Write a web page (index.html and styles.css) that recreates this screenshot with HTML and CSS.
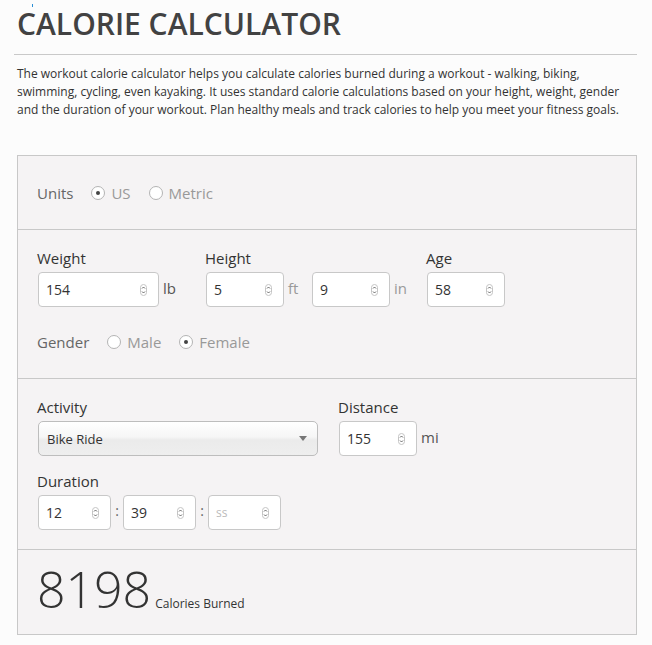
FILE: index.html
```html
<!DOCTYPE html>
<html>
<head>
<meta charset="utf-8">
<link rel="stylesheet" href="styles.css">
</head>
<body>
<div class="page">
  <span class="crumb"></span>
  <h1 class="title">CALORIE CALCULATOR</h1>
  <hr class="rule">
  <p class="intro">The workout calorie calculator helps you calculate calories burned during a workout - walking, biking,<br>swimming, cycling, even kayaking. It uses standard calorie calculations based on your height, weight, gender<br>and the duration of your workout. Plan healthy meals and track calories to help you meet your fitness goals.</p>

  <div class="calc">
    <section class="sec sec-units">
      <div class="radio-row">
        <span class="row-label">Units</span>
        <span class="opt"><span class="radio on"></span>US</span>
        <span class="opt"><span class="radio"></span>Metric</span>
      </div>
    </section>

    <section class="sec sec-body">
      <div class="fields">
        <div class="field">
          <div class="label">Weight</div>
          <div class="line">
            <div class="num w-wide"><span class="val">154</span><svg class="spin" viewBox="0 0 7 12" width="7" height="12"><rect x="0.5" y="0.5" width="6" height="11" rx="3" fill="#fff" stroke="#c4c4c4"/><path d="M2 4.5 L3.5 3 L5 4.5 M2 7.5 L3.5 9 L5 7.5" fill="none" stroke="#555" stroke-width="0.9"/></svg></div>
            <span class="unit u-lb">lb</span>
          </div>
        </div>
        <div class="field">
          <div class="label">Height</div>
          <div class="line">
            <div class="num"><span class="val">5</span><svg class="spin" viewBox="0 0 7 12" width="7" height="12"><rect x="0.5" y="0.5" width="6" height="11" rx="3" fill="#fff" stroke="#c4c4c4"/><path d="M2 4.5 L3.5 3 L5 4.5 M2 7.5 L3.5 9 L5 7.5" fill="none" stroke="#555" stroke-width="0.9"/></svg></div>
            <span class="unit light u-ft">ft</span>
            <div class="num"><span class="val">9</span><svg class="spin" viewBox="0 0 7 12" width="7" height="12"><rect x="0.5" y="0.5" width="6" height="11" rx="3" fill="#fff" stroke="#c4c4c4"/><path d="M2 4.5 L3.5 3 L5 4.5 M2 7.5 L3.5 9 L5 7.5" fill="none" stroke="#555" stroke-width="0.9"/></svg></div>
            <span class="unit light u-in">in</span>
          </div>
        </div>
        <div class="field">
          <div class="label">Age</div>
          <div class="line">
            <div class="num"><span class="val">58</span><svg class="spin" viewBox="0 0 7 12" width="7" height="12"><rect x="0.5" y="0.5" width="6" height="11" rx="3" fill="#fff" stroke="#c4c4c4"/><path d="M2 4.5 L3.5 3 L5 4.5 M2 7.5 L3.5 9 L5 7.5" fill="none" stroke="#555" stroke-width="0.9"/></svg></div>
          </div>
        </div>
      </div>
      <div class="radio-row gender">
        <span class="row-label">Gender</span>
        <span class="opt"><span class="radio"></span>Male</span>
        <span class="opt"><span class="radio on"></span>Female</span>
      </div>
    </section>

    <section class="sec sec-activity">
      <div class="fields">
        <div class="field">
          <div class="label">Activity</div>
          <div class="select"><span>Bike Ride</span><span class="caret"></span></div>
        </div>
        <div class="field">
          <div class="label">Distance</div>
          <div class="line">
            <div class="num"><span class="val">155</span><svg class="spin" viewBox="0 0 7 12" width="7" height="12"><rect x="0.5" y="0.5" width="6" height="11" rx="3" fill="#fff" stroke="#c4c4c4"/><path d="M2 4.5 L3.5 3 L5 4.5 M2 7.5 L3.5 9 L5 7.5" fill="none" stroke="#555" stroke-width="0.9"/></svg></div>
            <span class="unit">mi</span>
          </div>
        </div>
      </div>
      <div class="field duration">
        <div class="label">Duration</div>
        <div class="line">
          <div class="num w-dur"><span class="val">12</span><svg class="spin" viewBox="0 0 7 12" width="7" height="12"><rect x="0.5" y="0.5" width="6" height="11" rx="3" fill="#fff" stroke="#c4c4c4"/><path d="M2 4.5 L3.5 3 L5 4.5 M2 7.5 L3.5 9 L5 7.5" fill="none" stroke="#555" stroke-width="0.9"/></svg></div>
          <span class="colon">:</span>
          <div class="num w-dur"><span class="val">39</span><svg class="spin" viewBox="0 0 7 12" width="7" height="12"><rect x="0.5" y="0.5" width="6" height="11" rx="3" fill="#fff" stroke="#c4c4c4"/><path d="M2 4.5 L3.5 3 L5 4.5 M2 7.5 L3.5 9 L5 7.5" fill="none" stroke="#555" stroke-width="0.9"/></svg></div>
          <span class="colon">:</span>
          <div class="num w-dur"><span class="val ph">ss</span><svg class="spin" viewBox="0 0 7 12" width="7" height="12"><rect x="0.5" y="0.5" width="6" height="11" rx="3" fill="#fff" stroke="#c4c4c4"/><path d="M2 4.5 L3.5 3 L5 4.5 M2 7.5 L3.5 9 L5 7.5" fill="none" stroke="#555" stroke-width="0.9"/></svg></div>
        </div>
      </div>
    </section>

    <section class="sec sec-result">
      <span class="big">8198</span><span class="cap">Calories Burned</span>
    </section>
  </div>
</div>
</body>
</html>
```
FILE: styles.css
```css
* { box-sizing: border-box; }
html, body { margin: 0; padding: 0; }
body {
  background: #fcfcfc;
  font-family: "Open Sans", "Liberation Sans", sans-serif;
  color: #333;
}
.page {
  position: relative;
  padding-left: 17px;
  width: 637px;
}
.crumb {
  position: absolute;
  left: 32px;
  top: 0;
  width: 1px;
  height: 3px;
  background: #2a8fd6;
}
.title {
  margin: 4px 0 0 0;
  font-size: 30px;
  line-height: 40px;
  font-weight: 600;
  color: #424242;
}
.rule {
  margin: 10px 0 0 -3px;
  border: 0;
  border-top: 1px solid #c9c9c9;
  height: 0;
}
.intro {
  margin: 10px 0 0 0;
  font-size: 12px;
  line-height: 18px;
  color: #333;
  white-space: nowrap;
}
.calc {
  margin-top: 36px;
  width: 620px;
  background: #f5f3f4;
  border: 1px solid #c8c8c8;
}
.sec {
  padding-left: 19px;
  border-top: 1px solid #c8c8c8;
}
.sec:first-child { border-top: 0; }
.sec-units { padding-top: 27px; padding-bottom: 26px; }
.sec-body { padding-top: 18px; padding-bottom: 26px; }
.sec-activity { padding-top: 18px; padding-bottom: 19px; }
.sec-result { padding-top: 14px; padding-bottom: 20px; display: flex; align-items: baseline; }

.radio-row {
  display: flex;
  align-items: center;
  font-size: 15px;
  line-height: 20px;
  height: 20px;
}
.row-label { color: #666; }
.opt {
  display: flex;
  align-items: center;
  color: #999;
  margin-left: 18px;
}
.radio {
  width: 14px;
  height: 14px;
  border-radius: 50%;
  border: 1px solid #b4b4b4;
  background: #fff;
  margin-right: 6px;
  position: relative;
}
.radio.on::after {
  content: "";
  position: absolute;
  left: 4px;
  top: 4px;
  width: 4px;
  height: 4px;
  border-radius: 50%;
  background: #444;
}
.gender { margin-top: 25px; }

.fields { display: flex; }
.label {
  font-size: 15px;
  line-height: 20px;
  color: #333;
  margin-bottom: 4px;
}
.line { display: flex; align-items: flex-start; }
.num {
  width: 78px;
  height: 35px;
  background: #fff;
  border: 1px solid #c8c8c8;
  border-radius: 4px;
  display: flex;
  align-items: center;
  justify-content: space-between;
  padding: 0 11px 0 7px;
  margin-left: 1px;
}
.line .num + .unit + .num { margin-left: 0; }
.num.w-wide { width: 121px; }
.num.w-dur { width: 73px; }
.val { font-size: 14px; color: #333; }
.val.ph { font-size: 12px; color: #bbb; }
.spin { display: block; }
.unit {
  font-size: 15px;
  line-height: 20px;
  color: #555;
  margin-left: 4px;
  padding-top: 6px;
}
.unit.light { color: #999; }
.u-lb { width: 42px; }
.u-ft { width: 24px; }
.u-in { width: 32px; }

.select {
  width: 280px;
  height: 35px;
  margin-left: 1px;
  border: 1px solid #bdbdbd;
  border-radius: 5px;
  background: linear-gradient(#ffffff 0%, #f6f6f6 45%, #ebebeb 55%, #eeeeee 100%);
  display: flex;
  align-items: center;
  justify-content: space-between;
  padding: 0 10px 0 8px;
  font-size: 13px;
  color: #333;
  margin-right: 20px;
}
.caret {
  width: 0;
  height: 0;
  border-left: 4px solid transparent;
  border-right: 4px solid transparent;
  border-top: 5px solid #777;
}
.duration { margin-top: 15px; }
.colon {
  width: 12px;
  text-align: center;
  font-size: 14px;
  line-height: 20px;
  padding-top: 6px;
  color: #666;
}
.line .colon + .num { margin-left: 0; }

.big {
  font-size: 50px;
  line-height: 50px;
  font-weight: 300;
  color: #333;
}
.cap {
  font-size: 12px;
  color: #333;
  margin-left: 4px;
}
```
